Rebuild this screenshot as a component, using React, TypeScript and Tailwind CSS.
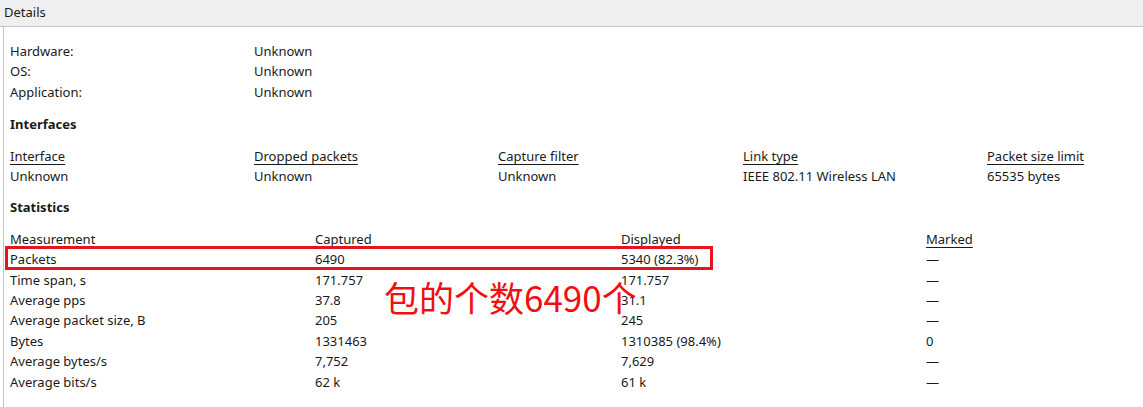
import React from "react";

const font = { fontFamily: '"Noto Sans", "Liberation Sans", sans-serif' };

type StatRow = { label: string; captured: string; displayed: string; marked: string };

const hostRows: [string, string][] = [
  ["Hardware:", "Unknown"],
  ["OS:", "Unknown"],
  ["Application:", "Unknown"],
];

const ifaceHeaders = ["Interface", "Dropped packets", "Capture filter", "Link type", "Packet size limit"];
const ifaceValues = ["Unknown", "Unknown", "Unknown", "IEEE 802.11 Wireless LAN", "65535 bytes"];

const stats: StatRow[] = [
  { label: "Packets", captured: "6490", displayed: "5340 (82.3%)", marked: "—" },
  { label: "Time span, s", captured: "171.757", displayed: "171.757", marked: "—" },
  { label: "Average pps", captured: "37.8", displayed: "31.1", marked: "—" },
  { label: "Average packet size, B", captured: "205", displayed: "245", marked: "—" },
  { label: "Bytes", captured: "1331463", displayed: "1310385 (98.4%)", marked: "0" },
  { label: "Average bytes/s", captured: "7,752", displayed: "7,629", marked: "—" },
  { label: "Average bits/s", captured: "62 k", displayed: "61 k", marked: "—" },
];

const ifaceCols = "grid grid-cols-[244px_244px_245px_244px_244px]";
const statCols = "grid grid-cols-[305px_306px_305px_305px]";

const App = () => {
  return (
    <div className="w-[1143px] h-[407px] overflow-hidden bg-white text-[13px] text-[#1a1a1a]" style={font}>
      <div className="h-[27px] bg-[#efefef] px-[4px] flex items-center border-b border-[#c4c4c4]">Details</div>
      <div className="relative ml-[3px] h-[380px] border-l border-[#c4c4c4] bg-white pl-[6px] pt-[14px] leading-[20.4px]">
        {hostRows.map(([k, v]) => (
          <div key={k} className="grid grid-cols-[244px_1fr]">
            <div>{k}</div>
            <div>{v}</div>
          </div>
        ))}

        <div className="mt-[12px] mb-[11px] font-bold">Interfaces</div>
        <div className={ifaceCols}>
          {ifaceHeaders.map((h) => (
            <div key={h}>
              <span className="underline underline-offset-[3px]">{h}</span>
            </div>
          ))}
        </div>
        <div className={ifaceCols}>
          {ifaceValues.map((v, i) => (
            <div key={i} className="whitespace-nowrap">{v}</div>
          ))}
        </div>

        <div className="mt-[11px] mb-[11px] font-bold">Statistics</div>
        <div className={statCols}>
          <div>Measurement</div>
          <div>Captured</div>
          <div>Displayed</div>
          <div>
            <span className="underline underline-offset-[3px]">Marked</span>
          </div>
        </div>
        {stats.map((r, i) => (
          <div key={r.label} className={`${statCols} relative`}>
            <div>{r.label}</div>
            <div>{r.captured}</div>
            <div>{r.displayed}</div>
            <div>{r.marked}</div>
            {i === 0 && (
              <div className="absolute left-[-5px] top-[-3px] w-[708px] h-[24px] border-[3px] border-[#e4151f]" />
            )}
          </div>
        ))}

        <div
          className="absolute left-[380px] top-[252px] text-[35px] leading-none text-[#f01010]"
          style={{ fontFamily: '"Noto Sans CJK SC", "Noto Sans", sans-serif' }}
        >
          包的个数6490个
        </div>
      </div>
    </div>
  );
};

export default App;
